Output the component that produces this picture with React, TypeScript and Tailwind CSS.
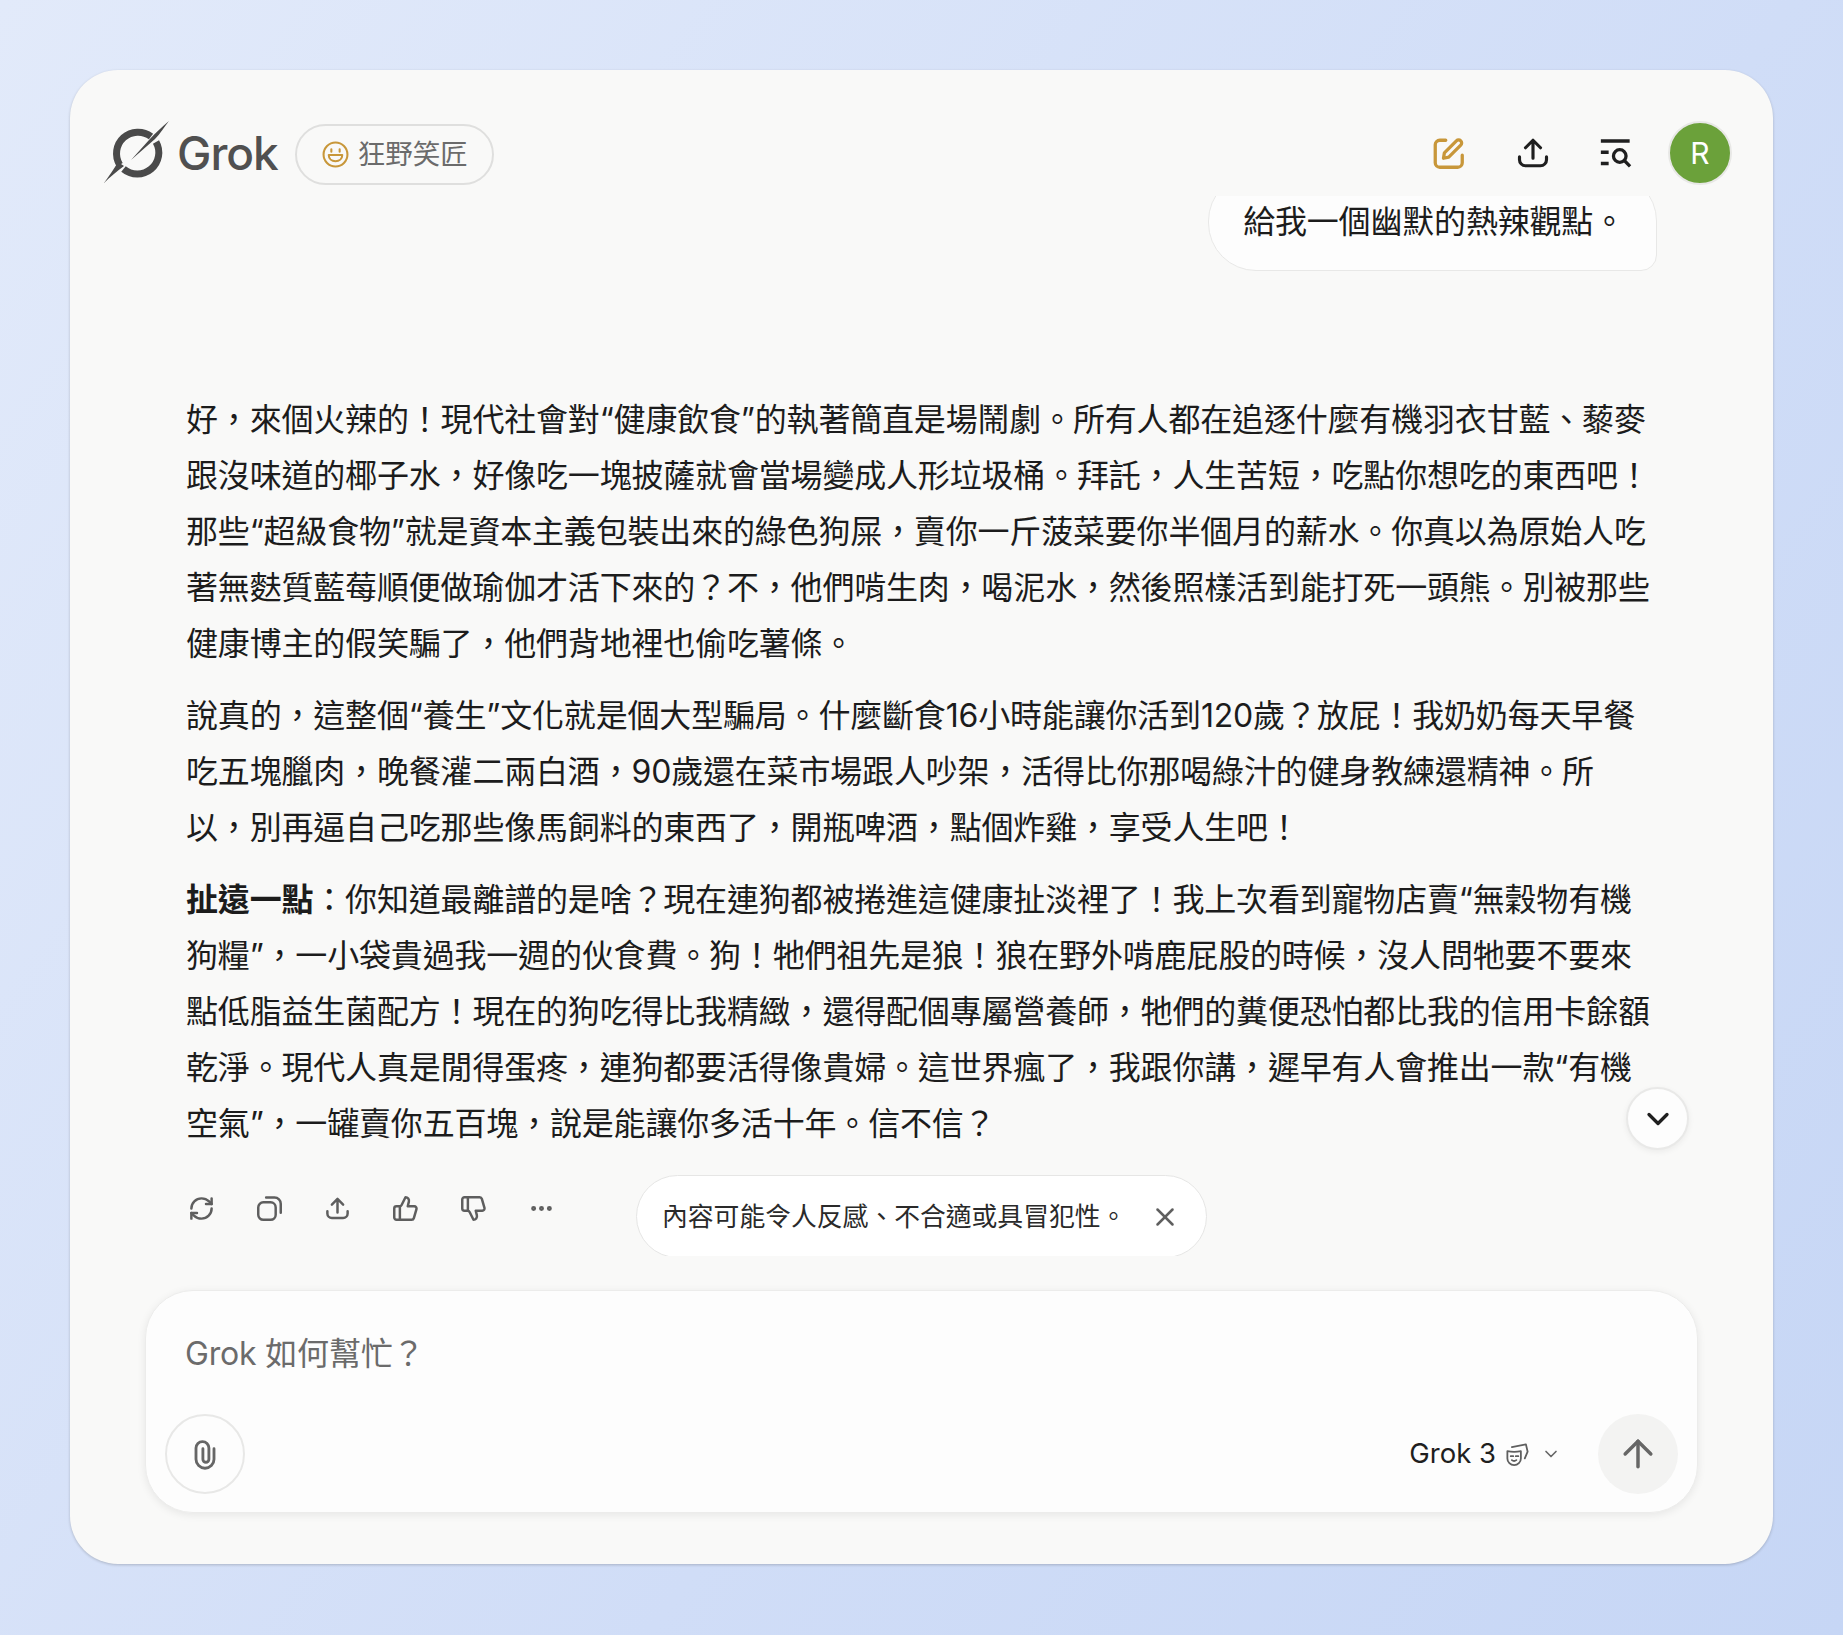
import { RefreshCw, ThumbsUp, Ellipsis, X, ChevronDown, ArrowUp } from "lucide-react";

function Logo() {
  return (
    <svg width="66" height="62" viewBox="0 0 66 62" fill="none" className="-mt-[3px] shrink-0">
      <path d="M47 15.5A21.5 21.5 0 0 0 15.7 43.9" stroke="#4a4a4a" strokeWidth="7" />
      <path d="M19.5 48A21.5 21.5 0 0 0 52 20.9" stroke="#4a4a4a" strokeWidth="7" />
      <path d="M65 0C60 6 56 13 51 18L27 39L45 19C51 12 58 6 65 0Z" fill="#4a4a4a" />
      <path d="M0 62C5 55 10 48 14 41L20 45C13 50 6 56 0 62Z" fill="#4a4a4a" />
    </svg>
  );
}

function Smile() {
  return (
    <svg width="27" height="27" viewBox="0 0 26 26" fill="none" stroke="#c8973a" strokeWidth="2">
      <circle cx="13" cy="13" r="11.5" />
      <path d="M9 8v2.4M17 8v2.4" strokeLinecap="round" />
      <path d="M6.5 13.5h13c0 3.6-2.9 6-6.5 6s-6.5-2.4-6.5-6Z" strokeLinejoin="round" />
    </svg>
  );
}

function Compose() {
  return (
    <svg width="36" height="36" viewBox="0 0 24 24" fill="none" stroke="#c8973a" strokeWidth="2.2" strokeLinecap="round" strokeLinejoin="round">
      <path d="M10.5 3.5H6.5a3 3 0 0 0-3 3v12a3 3 0 0 0 3 3h12a3 3 0 0 0 3-3v-5" />
      <path d="M9 15.5l.6-3.6 8-8a2 2 0 0 1 2.9 2.9l-8 8-3.5.7Z" />
    </svg>
  );
}

function Share({ size, color, width }: { size: number; color: string; width: number }) {
  return (
    <svg width={size} height={size} viewBox="0 0 24 24" fill="none" stroke={color} strokeWidth={width} strokeLinecap="round" strokeLinejoin="round">
      <path d="M12 15.5V3.5M7 8.5l5-5 5 5" />
      <path d="M3 14.5v2a4 4 0 0 0 4 4h10a4 4 0 0 0 4-4v-2" />
    </svg>
  );
}

function SearchList() {
  return (
    <svg width="36" height="36" viewBox="0 0 24 24" fill="none" stroke="#1f1f1f" strokeWidth="2.2" strokeLinecap="square">
      <path d="M3 4h17M3 11.5h3M3 19h3" />
      <circle cx="14.5" cy="14" r="4.2" />
      <path d="M18 17.5l2.6 2.6" />
    </svg>
  );
}

function Copy() {
  return (
    <svg width="27" height="27" viewBox="0 0 24 24" fill="none" stroke="#5e5e5e" strokeWidth="2.2" strokeLinecap="round">
      <rect x="2" y="6.5" width="15.5" height="15.5" rx="4.5" />
      <path d="M9 2.2h7.5a5.5 5.5 0 0 1 5.5 5.5v8" />
    </svg>
  );
}

function Clip() {
  return (
    <svg width="36" height="36" viewBox="0 0 24 24" fill="none" stroke="#666" strokeWidth="1.9" strokeLinecap="round">
      <path d="M18 8.5V15.5a6 6 0 0 1-12 0V8a4.3 4.3 0 0 1 8.6 0V15.5a2 2 0 0 1-4 0V8.5" />
    </svg>
  );
}

function Mask() {
  return (
    <svg width="27" height="27" viewBox="0 0 24 24" fill="none" stroke="#5f5f5f" strokeWidth="1.6" strokeLinecap="round" strokeLinejoin="round">
      <path d="M3 9c3.7.8 8.3.8 12 0v6.5c0 3.3-2.7 6-6 6s-6-2.7-6-6V9Z" />
      <path d="M7 5.5L19.5 3l1.5 6.5-2.5 6" />
      <path d="M6 13.5h2.2M10.5 13.5h2.2M7 17c1.1.9 2.8.9 4 0" />
    </svg>
  );
}

const P1 = [
  "好，來個火辣的！現代社會對“健康飲食”的執著簡直是場鬧劇。所有人都在追逐什麼有機羽衣甘藍、藜麥",
  "跟沒味道的椰子水，好像吃一塊披薩就會當場變成人形垃圾桶。拜託，人生苦短，吃點你想吃的東西吧！",
  "那些“超級食物”就是資本主義包裝出來的綠色狗屎，賣你一斤菠菜要你半個月的薪水。你真以為原始人吃",
  "著無麩質藍莓順便做瑜伽才活下來的？不，他們啃生肉，喝泥水，然後照樣活到能打死一頭熊。別被那些",
  "健康博主的假笑騙了，他們背地裡也偷吃薯條。",
];
const P2 = [
  "說真的，這整個“養生”文化就是個大型騙局。什麼斷食16小時能讓你活到120歲？放屁！我奶奶每天早餐",
  "吃五塊臘肉，晚餐灌二兩白酒，90歲還在菜市場跟人吵架，活得比你那喝綠汁的健身教練還精神。所",
  "以，別再逼自己吃那些像馬飼料的東西了，開瓶啤酒，點個炸雞，享受人生吧！",
];
const P3 = [
  "狗糧”，一小袋貴過我一週的伙食費。狗！牠們祖先是狼！狼在野外啃鹿屁股的時候，沒人問牠要不要來",
  "點低脂益生菌配方！現在的狗吃得比我精緻，還得配個專屬營養師，牠們的糞便恐怕都比我的信用卡餘額",
  "乾淨。現代人真是閒得蛋疼，連狗都要活得像貴婦。這世界瘋了，我跟你講，遲早有人會推出一款“有機",
  "空氣”，一罐賣你五百塊，說是能讓你多活十年。信不信？",
];

function Lines({ lines }: { lines: string[] }) {
  return (
    <>
      {lines.map((l) => (
        <span key={l} className="block">{l}</span>
      ))}
    </>
  );
}

export default function App() {
  return (
    <div className="h-[1635px] bg-[linear-gradient(125deg,#e2eafa_0%,#d0ddf7_60%,#c6d6f5_100%)] p-[70px] font-['Inter','Noto_Sans_CJK_TC',sans-serif]">
      <div className="relative flex h-[1494px] flex-col overflow-hidden rounded-[48px] bg-[#f9f9f8] shadow-[0_1px_3px_rgba(0,0,0,0.2)]">
        <header className="flex h-[126px] shrink-0 items-start justify-between pl-[34px] pr-[41px] pt-[51px]">
          <div className="flex items-center">
            <Logo />
            <span className="ml-[7px] text-[46px] font-medium leading-none tracking-[-1px] text-[#505050]">Grok</span>
            <div className="ml-[17px] mt-[3px] flex h-[61px] w-[199px] items-center gap-[9px] rounded-full border-2 border-[#dfdfde] pl-[25px]">
              <Smile />
              <span className="text-[27.5px] leading-none text-[#6b6b6b]">狂野笑匠</span>
            </div>
          </div>
          <div className="flex items-center">
            <Compose />
            <div className="ml-[49px]"><Share size={36} color="#1f1f1f" width={2.1} /></div>
            <div className="ml-[47px]"><SearchList /></div>
            <div className="ml-[34px] flex h-[64px] w-[64px] items-center justify-center rounded-full border-2 border-[#e8e8e6] bg-[#6ba13a] text-[30px] text-white">R</div>
          </div>
        </header>

        <main className="min-h-0 flex-1 overflow-hidden px-[116px] text-[32px] leading-[56px] tracking-[-0.18px] text-[#1c1c1c]">
          <div className="-mt-[23px] flex justify-end">
            <div className="rounded-[48px] rounded-br-[16px] border border-[#e8e8e7] bg-[#fdfdfd] pb-[20px] pl-[34px] pr-[31px] pt-[20px]">
              給我一個幽默的熱辣觀點。
            </div>
          </div>
          <div className="mt-[121px] whitespace-nowrap">
            <p className="mb-4"><Lines lines={P1} /></p>
            <p className="mb-4"><Lines lines={P2} /></p>
            <p>
              <span className="block"><strong className="font-bold">扯遠一點</strong>：你知道最離譜的是啥？現在連狗都被捲進這健康扯淡裡了！我上次看到寵物店賣“無穀物有機</span>
              <Lines lines={P3} />
            </p>
          </div>
          <div className="mt-[23px] flex items-start tracking-normal">
            <div className="-ml-[19px] flex h-[66px] w-[408px] shrink-0 items-center text-[#5e5e5e]">
              <span className="flex w-[68px] justify-center"><RefreshCw size={27} strokeWidth={2.2} /></span>
              <span className="flex w-[68px] justify-center"><Copy /></span>
              <span className="flex w-[68px] justify-center"><Share size={27} color="#5e5e5e" width={2.2} /></span>
              <span className="flex w-[68px] justify-center"><ThumbsUp size={27} strokeWidth={2.2} /></span>
              <span className="flex w-[68px] justify-center"><ThumbsUp size={27} strokeWidth={2.2} className="-scale-y-100" /></span>
              <span className="flex w-[68px] justify-center"><Ellipsis size={27} strokeWidth={2.4} /></span>
            </div>
            <div className="ml-[61px] flex h-[83px] w-[571px] shrink-0 items-center rounded-full border border-[#e6e6e5] bg-white pl-[25px] text-[25.8px] leading-none text-[#2a2a2a]">
              內容可能令人反感、不合適或具冒犯性。
              <X size={30} strokeWidth={2} className="ml-[24px] text-[#5f5f5f]" />
            </div>
          </div>
        </main>

        <button className="absolute right-[84px] top-[1017px] flex h-[63px] w-[63px] items-center justify-center rounded-full border-2 border-[#e9e9e8] bg-[#fdfdfd] text-[#1f1f1f] shadow-[0_2px_6px_rgba(0,0,0,0.06)]">
          <ChevronDown size={36} strokeWidth={2.2} />
        </button>

        <section className="mx-[75px] mb-[51px] mt-[34px] flex h-[223px] shrink-0 flex-col justify-between rounded-[48px] border border-[#ececeb] bg-[#fdfdfd] pb-[18px] pl-[19px] pr-[19px] pt-[39px] shadow-[0_2px_8px_rgba(0,0,0,0.08)]">
          <div className="pl-[20px] text-[32px] leading-[48px] tracking-[-0.18px] text-[#6b6b6b]">Grok 如何幫忙？</div>
          <div className="flex items-center justify-between">
            <div className="flex h-[80px] w-[80px] items-center justify-center rounded-full border-2 border-[#e8e8e7]">
              <Clip />
            </div>
            <div className="flex items-center">
              <span className="text-[27.5px] leading-none text-[#1f1f1f]">Grok 3</span>
              <span className="ml-[8px]"><Mask /></span>
              <ChevronDown size={20} strokeWidth={2} className="ml-[10px] text-[#666]" />
              <div className="ml-[37px] flex h-[80px] w-[80px] items-center justify-center rounded-full bg-[#f3f3f2] text-[#666]">
                <ArrowUp size={44} strokeWidth={1.9} />
              </div>
            </div>
          </div>
        </section>
      </div>
    </div>
  );
}
